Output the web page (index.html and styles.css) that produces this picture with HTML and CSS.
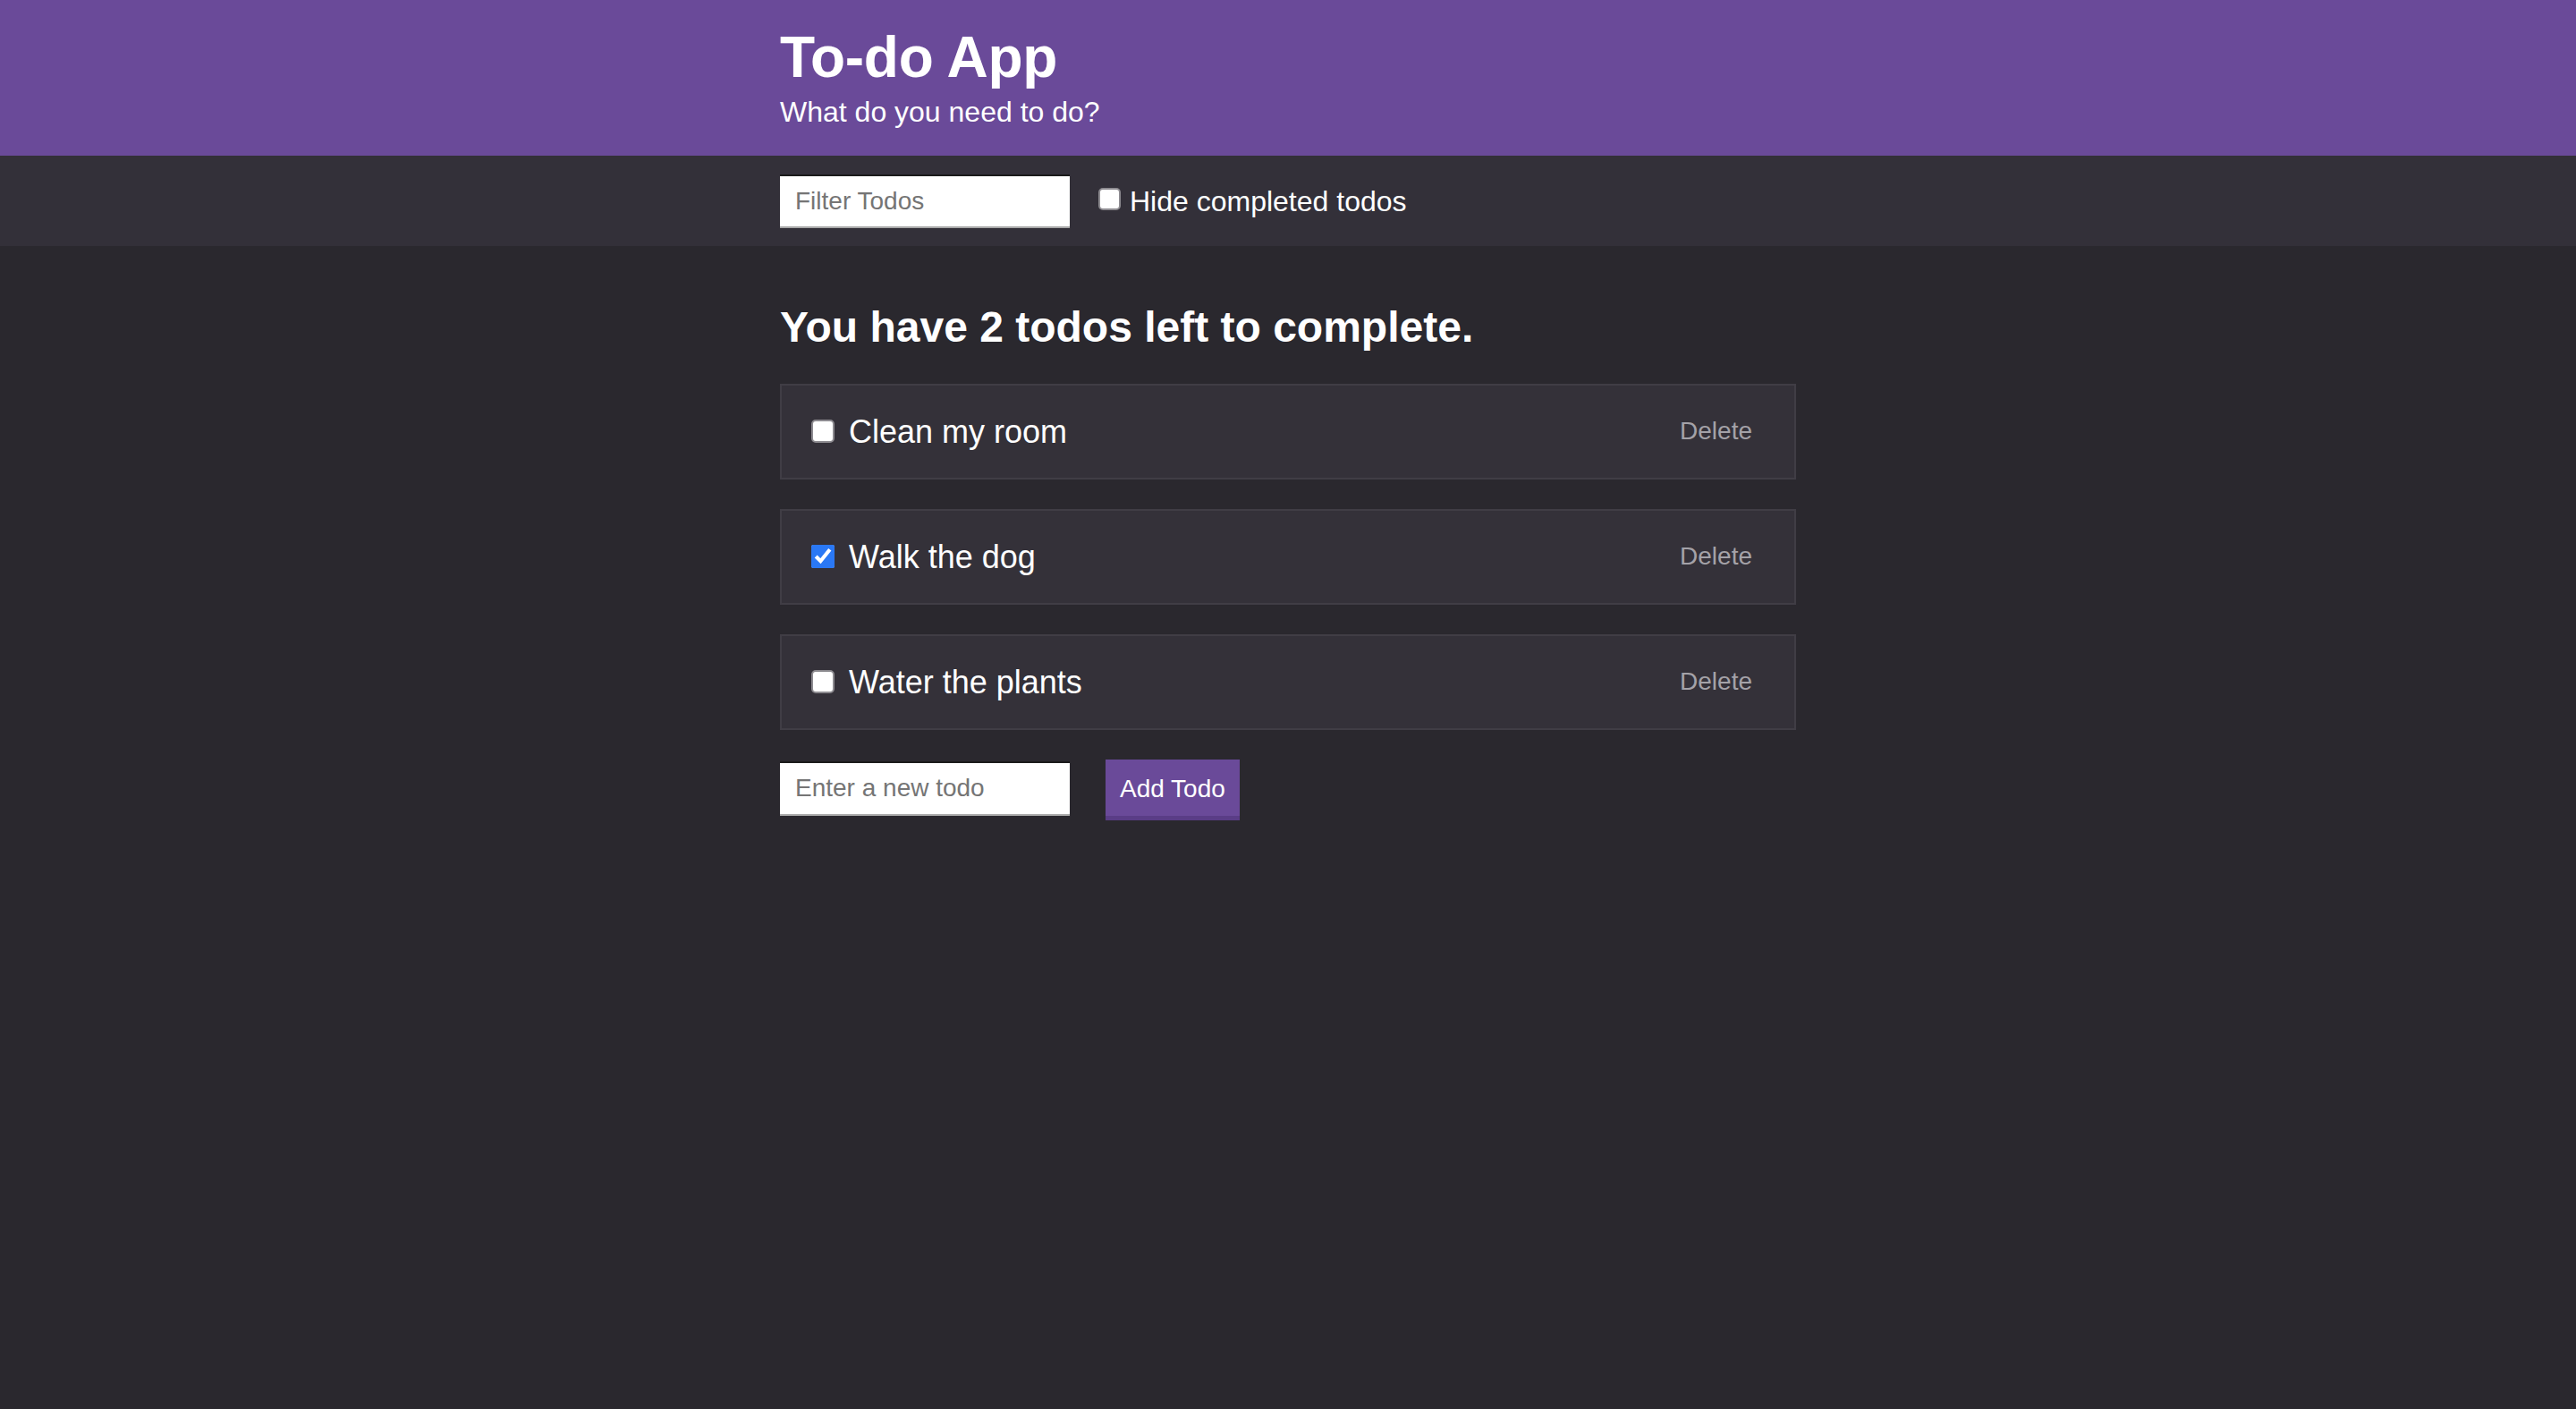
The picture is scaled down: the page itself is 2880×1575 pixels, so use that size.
FILE: index.html
```html
<!DOCTYPE html>
<html lang="en">
<head>
<meta charset="utf-8">
<title>To-do App</title>
<link rel="stylesheet" href="styles.css">
</head>
<body>
<header class="header">
  <div class="container">
    <h1 class="title">To-do App</h1>
    <p class="subtitle">What do you need to do?</p>
  </div>
</header>
<div class="filter-bar">
  <div class="container filter-row">
    <input class="text-input" type="text" placeholder="Filter Todos">
    <label class="hide-label"><input class="checkbox" type="checkbox"><span>Hide completed todos</span></label>
  </div>
</div>
<main class="container main">
  <h2 class="summary">You have 2 todos left to complete.</h2>
  <div class="todo-list">
    <div class="todo">
      <label class="todo-label"><input class="checkbox" type="checkbox"><span>Clean my room</span></label>
      <button class="delete">Delete</button>
    </div>
    <div class="todo">
      <label class="todo-label"><input class="checkbox" type="checkbox" checked><span>Walk the dog</span></label>
      <button class="delete">Delete</button>
    </div>
    <div class="todo">
      <label class="todo-label"><input class="checkbox" type="checkbox"><span>Water the plants</span></label>
      <button class="delete">Delete</button>
    </div>
  </div>
  <form class="add-row">
    <input class="text-input add-input" type="text" placeholder="Enter a new todo">
    <button class="add-btn" type="button">Add Todo</button>
  </form>
</main>
</body>
</html>
```
FILE: styles.css
```css
* { box-sizing: border-box; }
html, body { margin: 0; padding: 0; }
body {
  background: #2a282e;
  color: #ffffff;
  font-family: "Liberation Sans", Arial, Helvetica, sans-serif;
  min-height: 1575px;
}
.container {
  max-width: 1136px;
  margin: 0 auto;
}
.header {
  background: #6a4a99;
  padding: 33px 0 29px;
}
.title {
  margin: 0;
  font-size: 64px;
  line-height: 63px;
  font-weight: 700;
  letter-spacing: -0.3px;
}
.subtitle {
  margin: 9px 0 0;
  font-size: 32px;
  line-height: 40px;
  font-weight: 400;
}
.filter-bar {
  background: #333039;
  padding: 21px 0 20px;
}
.filter-row {
  display: flex;
  align-items: center;
}
.text-input {
  width: 324px;
  height: 60px;
  background: #ffffff;
  border: none;
  border-top: 2px solid #1b1b1b;
  border-bottom: 2px solid #a9a9a9;
  padding: 0 16px 0 17px;
  font-family: "Liberation Sans", Arial, Helvetica, sans-serif;
  font-size: 28px;
  color: #222;
  outline: none;
}
.text-input::placeholder { color: #757575; }
.hide-label {
  display: flex;
  align-items: center;
  margin-left: 32px;
  font-size: 32px;
  line-height: 1.2;
}
.checkbox {
  width: 25px;
  height: 25px;
  margin: 0 10px 0 0;
  accent-color: #2a78f5;
}
.checkbox:not(:checked) {
  appearance: none;
  -webkit-appearance: none;
  background: #ffffff;
  border: 2px solid #8d8b90;
  border-radius: 5px;
}
.hide-label .checkbox { margin-top: -5px; }
.main {
  padding-top: 62px;
}
.summary {
  margin: 0 0 34px;
  font-size: 48px;
  line-height: 1.2;
  font-weight: 700;
}
.todo-list {
  display: flex;
  flex-direction: column;
  gap: 33px;
}
.todo {
  display: flex;
  align-items: center;
  justify-content: space-between;
  background: #343139;
  border: 2px solid #403d45;
  padding: 30px 47px 30px 33px;
}
.todo-label {
  display: flex;
  align-items: center;
  font-size: 36px;
  line-height: 43px;
}
.todo-label .checkbox {
  width: 26px;
  height: 26px;
  margin: 0 16px 0 0;
}
.delete {
  background: transparent;
  border: none;
  padding: 0;
  color: #a4a2a8;
  font-family: "Liberation Sans", Arial, Helvetica, sans-serif;
  font-size: 28px;
  cursor: pointer;
}
.add-row {
  display: flex;
  align-items: flex-start;
  gap: 40px;
  margin: 33px 0 0;
}
.add-input {
  margin-top: 2px;
  height: 61px;
}
.add-btn {
  background: #6a4a99;
  color: #ffffff;
  border: none;
  border-bottom: 5px solid #5a3d86;
  padding: 16px 16px 13px;
  font-family: "Liberation Sans", Arial, Helvetica, sans-serif;
  font-size: 28px;
  line-height: 34px;
  cursor: pointer;
}
```
